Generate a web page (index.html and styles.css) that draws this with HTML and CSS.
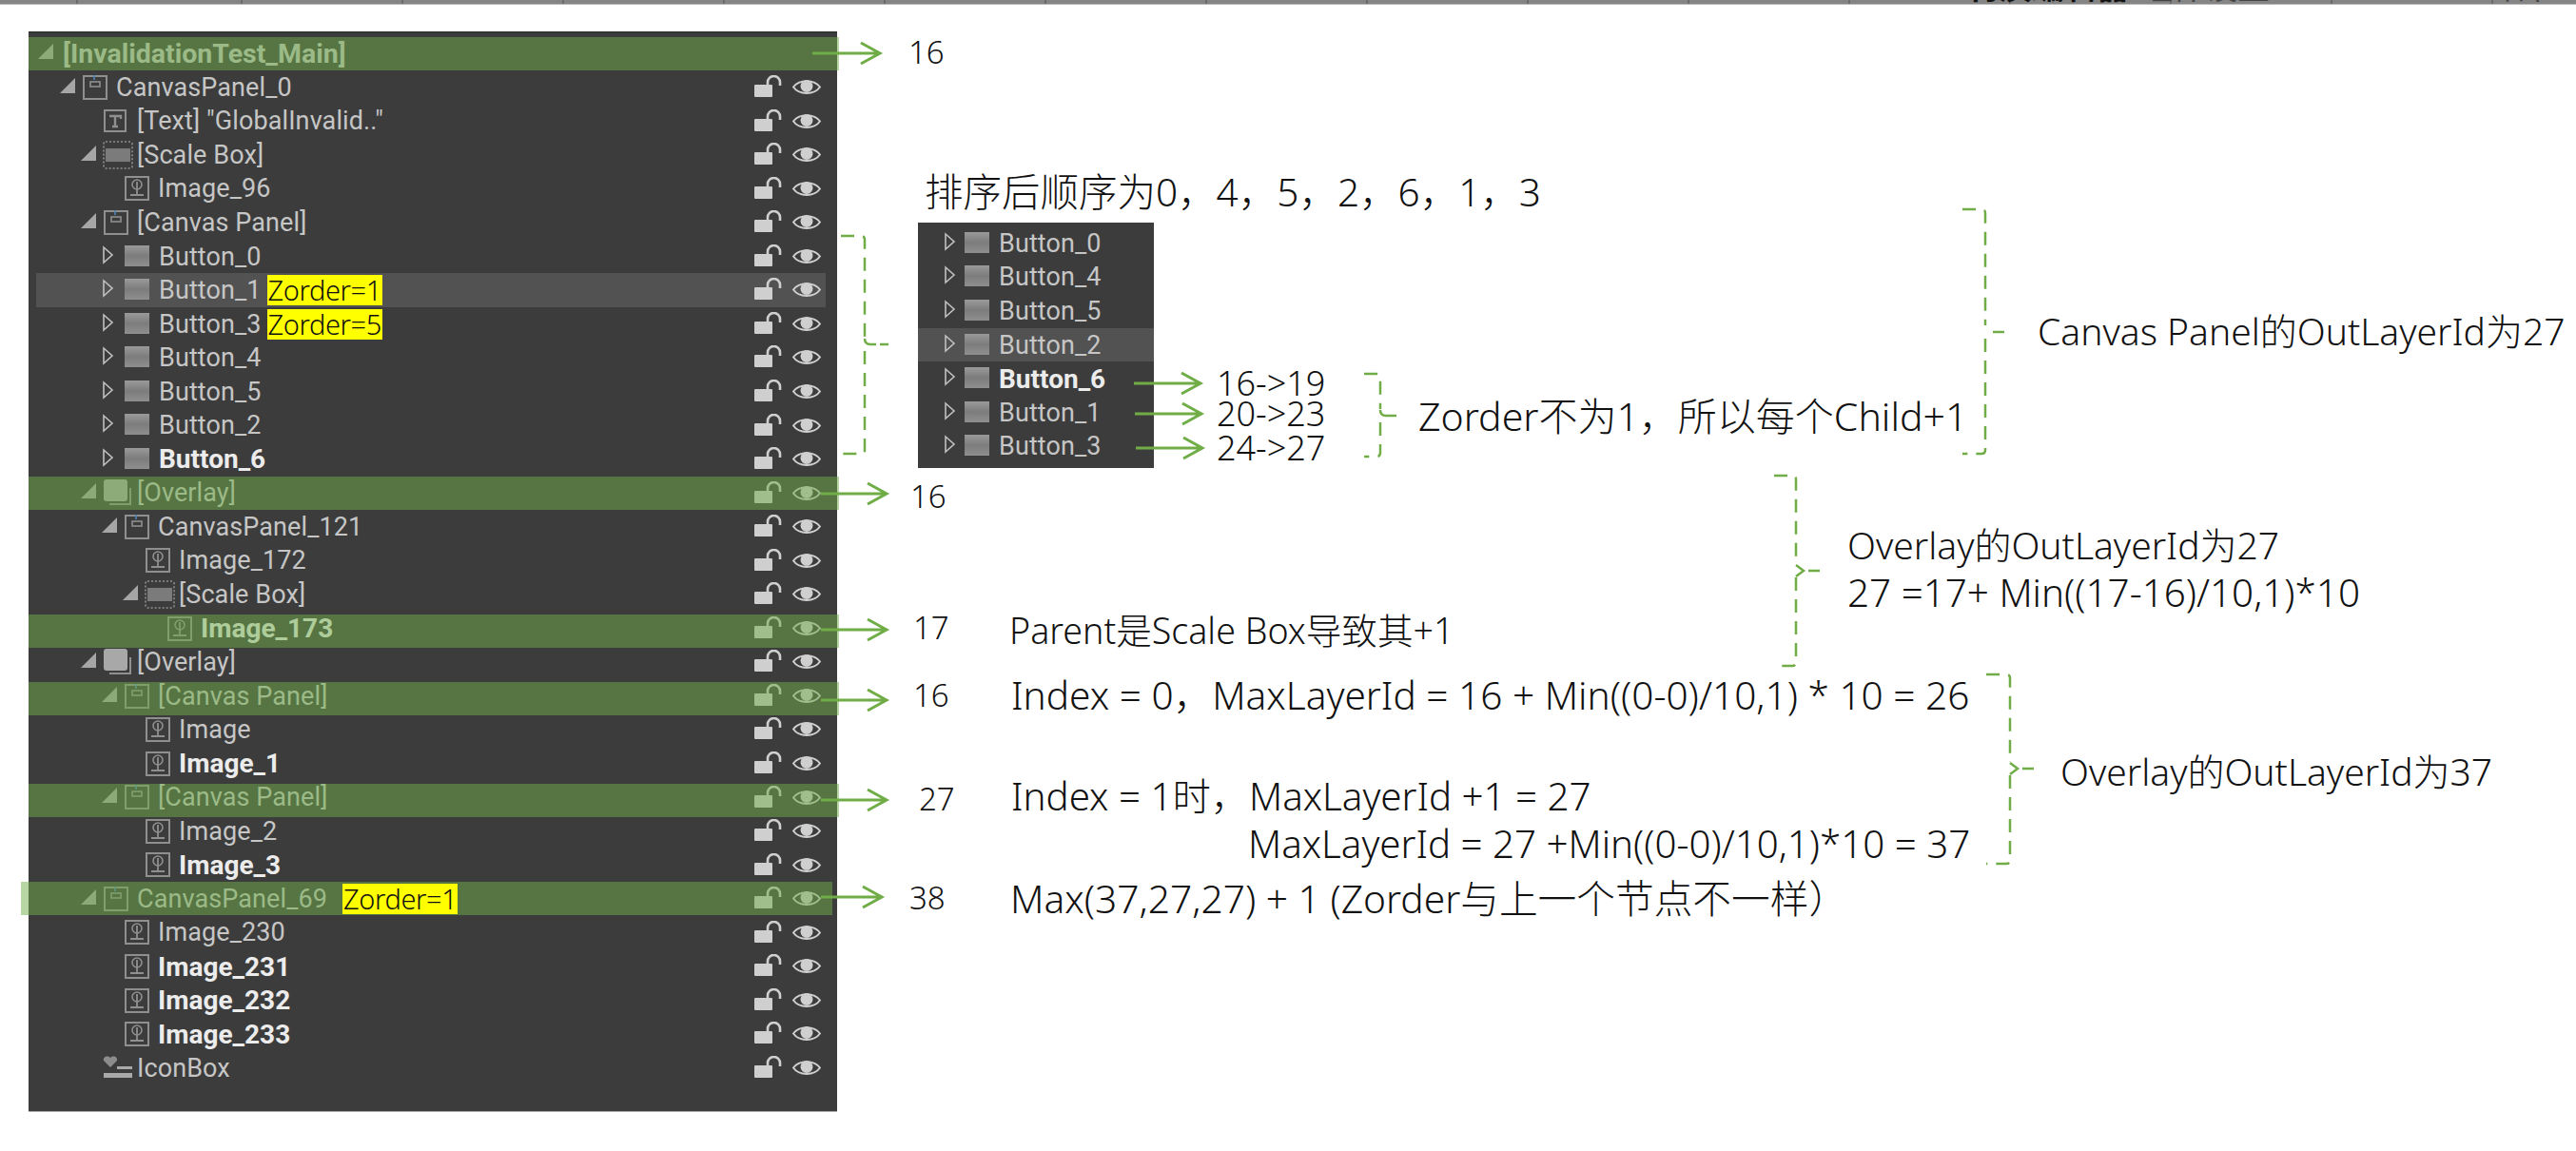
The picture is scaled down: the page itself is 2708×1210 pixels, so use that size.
FILE: index.html
```html
<!DOCTYPE html>
<html lang="zh-CN">
<head>
    <meta charset="UTF-8">
    <title>InvalidationTest_Main</title>
    <link rel="stylesheet" href="styles.css">
</head>
<body>
    <svg class="sprite" width="0" height="0">
        <defs>
            <linearGradient id="btn-fill" x1="0" y1="0" x2="0" y2="1"><stop offset="0" stop-color="#9a9a9a"/><stop offset="0.5" stop-color="#7c7c7c"/><stop offset="1" stop-color="#8f8f8f"/></linearGradient>
        </defs>
        <symbol id="i-open" viewBox="0 0 16 16"><path d="M16 0V16H0Z" fill="currentColor"/></symbol>
        <symbol id="i-closed" viewBox="0 0 13 20"><path d="M2 2L11 10L2 18Z" fill="none" stroke="currentColor" stroke-width="1.6"/></symbol>
        <symbol id="i-panel" viewBox="0 0 26 26"><rect x="1" y="1" width="24" height="24" fill="none" stroke="currentColor" stroke-width="2"/><rect x="8" y="7" width="10" height="5" fill="none" stroke="currentColor" stroke-width="1.6"/><path d="M12 0V5" stroke="#4d86b8" stroke-width="1.6"/></symbol>
        <symbol id="i-text" viewBox="0 0 24 24"><rect x="1" y="1" width="22" height="22" fill="none" stroke="currentColor" stroke-width="2"/><path d="M6 7H18V10M12 7V18M9 18H15" fill="none" stroke="currentColor" stroke-width="2.4"/></symbol>
        <symbol id="i-scale" viewBox="0 0 32 30"><rect x="1" y="1" width="30" height="28" rx="2" fill="none" stroke="currentColor" stroke-width="1.6" stroke-dasharray="2 2"/><rect x="3" y="8" width="26" height="14" fill="#7b7b7b"/></symbol>
        <symbol id="i-image" viewBox="0 0 26 26"><rect x="1" y="1" width="24" height="24" fill="none" stroke="currentColor" stroke-width="2"/><circle cx="13" cy="9" r="5" fill="none" stroke="currentColor" stroke-width="1.6"/><path d="M13 6V19M6 20H20" fill="none" stroke="currentColor" stroke-width="1.8"/></symbol>
        <symbol id="i-button" viewBox="0 0 26 22"><rect width="26" height="22" fill="url(#btn-fill)"/></symbol>
        <symbol id="i-overlay" viewBox="0 0 32 30"><path d="M7 27H29V10" fill="none" stroke="#8f8f8f" stroke-width="2"/><rect x="1" y="1" width="25" height="23" rx="3" fill="#a8a8a8"/></symbol>
        <symbol id="i-iconbox" viewBox="0 0 32 28"><path d="M8 13L1 6C0 2 5 0 8 3C11 0 16 2 15 6Z" fill="#8c8c8c"/><path d="M15 12H31V15H15ZM1 19H31V24H1Z" fill="#a9a9a9"/></symbol>
        <symbol id="i-lock" viewBox="0 0 29 23"><rect y="10" width="19" height="13" rx="1" fill="currentColor"/><path d="M14 11V7.5a6 6 0 0 1 13 0V11" fill="none" stroke="currentColor" stroke-width="2.6"/></symbol>
        <symbol id="i-eye" viewBox="0 0 30 19"><path d="M1 9.5C7 1 23 1 29 9.5C23 18 7 18 1 9.5Z" fill="none" stroke="currentColor" stroke-width="2"/><circle cx="15" cy="8.5" r="6.5" fill="currentColor"/></symbol>
    </svg>

    <div class="topbar">
        <span class="cut cut-a">材质编辑器</span>
        <span class="cut cut-b">组件设置</span>
        <span class="cut cut-c">细节</span>
    </div>

    <div class="tree main-tree">
        <div class="row d0 hl"><svg class="tw"><use href="#i-open"/></svg><b class="name root">[InvalidationTest_Main]</b></div>
        <div class="row d1"><svg class="tw"><use href="#i-open"/></svg><svg class="ic"><use href="#i-panel"/></svg><span class="name">CanvasPanel_0</span><svg class="lock"><use href="#i-lock"/></svg><svg class="eye"><use href="#i-eye"/></svg></div>
        <div class="row d2"><i class="tw"></i><svg class="ic ic-sm"><use href="#i-text"/></svg><span class="name">[Text] "GlobalInvalid.."</span><svg class="lock"><use href="#i-lock"/></svg><svg class="eye"><use href="#i-eye"/></svg></div>
        <div class="row d2"><svg class="tw"><use href="#i-open"/></svg><svg class="ic ic-wide"><use href="#i-scale"/></svg><span class="name">[Scale Box]</span><svg class="lock"><use href="#i-lock"/></svg><svg class="eye"><use href="#i-eye"/></svg></div>
        <div class="row d3"><i class="tw"></i><svg class="ic"><use href="#i-image"/></svg><span class="name">Image_96</span><svg class="lock"><use href="#i-lock"/></svg><svg class="eye"><use href="#i-eye"/></svg></div>
        <div class="row d2"><svg class="tw"><use href="#i-open"/></svg><svg class="ic"><use href="#i-panel"/></svg><span class="name">[Canvas Panel]</span><svg class="lock"><use href="#i-lock"/></svg><svg class="eye"><use href="#i-eye"/></svg></div>
        <div class="row d3"><svg class="tw tw-r"><use href="#i-closed"/></svg><svg class="ic ic-btn"><use href="#i-button"/></svg><span class="name">Button_0</span><svg class="lock"><use href="#i-lock"/></svg><svg class="eye"><use href="#i-eye"/></svg></div>
        <div class="row d3 hover"><svg class="tw tw-r"><use href="#i-closed"/></svg><svg class="ic ic-btn"><use href="#i-button"/></svg><span class="name">Button_1</span><mark class="zorder">Zorder=1</mark><svg class="lock"><use href="#i-lock"/></svg><svg class="eye"><use href="#i-eye"/></svg></div>
        <div class="row d3"><svg class="tw tw-r"><use href="#i-closed"/></svg><svg class="ic ic-btn"><use href="#i-button"/></svg><span class="name">Button_3</span><mark class="zorder">Zorder=5</mark><svg class="lock"><use href="#i-lock"/></svg><svg class="eye"><use href="#i-eye"/></svg></div>
        <div class="row d3"><svg class="tw tw-r"><use href="#i-closed"/></svg><svg class="ic ic-btn"><use href="#i-button"/></svg><span class="name">Button_4</span><svg class="lock"><use href="#i-lock"/></svg><svg class="eye"><use href="#i-eye"/></svg></div>
        <div class="row d3"><svg class="tw tw-r"><use href="#i-closed"/></svg><svg class="ic ic-btn"><use href="#i-button"/></svg><span class="name">Button_5</span><svg class="lock"><use href="#i-lock"/></svg><svg class="eye"><use href="#i-eye"/></svg></div>
        <div class="row d3"><svg class="tw tw-r"><use href="#i-closed"/></svg><svg class="ic ic-btn"><use href="#i-button"/></svg><span class="name">Button_2</span><svg class="lock"><use href="#i-lock"/></svg><svg class="eye"><use href="#i-eye"/></svg></div>
        <div class="row d3"><svg class="tw tw-r"><use href="#i-closed"/></svg><svg class="ic ic-btn"><use href="#i-button"/></svg><b class="name">Button_6</b><svg class="lock"><use href="#i-lock"/></svg><svg class="eye"><use href="#i-eye"/></svg></div>
        <div class="row d2 hl"><svg class="tw"><use href="#i-open"/></svg><svg class="ic ic-wide"><use href="#i-overlay"/></svg><span class="name">[Overlay]</span><svg class="lock"><use href="#i-lock"/></svg><svg class="eye"><use href="#i-eye"/></svg></div>
        <div class="row d3"><svg class="tw"><use href="#i-open"/></svg><svg class="ic"><use href="#i-panel"/></svg><span class="name">CanvasPanel_121</span><svg class="lock"><use href="#i-lock"/></svg><svg class="eye"><use href="#i-eye"/></svg></div>
        <div class="row d4"><i class="tw"></i><svg class="ic"><use href="#i-image"/></svg><span class="name">Image_172</span><svg class="lock"><use href="#i-lock"/></svg><svg class="eye"><use href="#i-eye"/></svg></div>
        <div class="row d4"><svg class="tw"><use href="#i-open"/></svg><svg class="ic ic-wide"><use href="#i-scale"/></svg><span class="name">[Scale Box]</span><svg class="lock"><use href="#i-lock"/></svg><svg class="eye"><use href="#i-eye"/></svg></div>
        <div class="row d5 hl hl-low"><i class="tw"></i><svg class="ic"><use href="#i-image"/></svg><b class="name">Image_173</b><svg class="lock"><use href="#i-lock"/></svg><svg class="eye"><use href="#i-eye"/></svg></div>
        <div class="row d2"><svg class="tw"><use href="#i-open"/></svg><svg class="ic ic-wide"><use href="#i-overlay"/></svg><span class="name">[Overlay]</span><svg class="lock"><use href="#i-lock"/></svg><svg class="eye"><use href="#i-eye"/></svg></div>
        <div class="row d3 hl hl-low"><svg class="tw"><use href="#i-open"/></svg><svg class="ic"><use href="#i-panel"/></svg><span class="name">[Canvas Panel]</span><svg class="lock"><use href="#i-lock"/></svg><svg class="eye"><use href="#i-eye"/></svg></div>
        <div class="row d4"><i class="tw"></i><svg class="ic"><use href="#i-image"/></svg><span class="name">Image</span><svg class="lock"><use href="#i-lock"/></svg><svg class="eye"><use href="#i-eye"/></svg></div>
        <div class="row d4"><i class="tw"></i><svg class="ic"><use href="#i-image"/></svg><b class="name">Image_1</b><svg class="lock"><use href="#i-lock"/></svg><svg class="eye"><use href="#i-eye"/></svg></div>
        <div class="row d3 hl hl-low"><svg class="tw"><use href="#i-open"/></svg><svg class="ic"><use href="#i-panel"/></svg><span class="name">[Canvas Panel]</span><svg class="lock"><use href="#i-lock"/></svg><svg class="eye"><use href="#i-eye"/></svg></div>
        <div class="row d4"><i class="tw"></i><svg class="ic"><use href="#i-image"/></svg><span class="name">Image_2</span><svg class="lock"><use href="#i-lock"/></svg><svg class="eye"><use href="#i-eye"/></svg></div>
        <div class="row d4"><i class="tw"></i><svg class="ic"><use href="#i-image"/></svg><b class="name">Image_3</b><svg class="lock"><use href="#i-lock"/></svg><svg class="eye"><use href="#i-eye"/></svg></div>
        <div class="row d2 hl hl-wide"><svg class="tw"><use href="#i-open"/></svg><svg class="ic"><use href="#i-panel"/></svg><span class="name">CanvasPanel_69</span><mark class="zorder zorder-far">Zorder=1</mark><svg class="lock"><use href="#i-lock"/></svg><svg class="eye"><use href="#i-eye"/></svg></div>
        <div class="row d3"><i class="tw"></i><svg class="ic"><use href="#i-image"/></svg><span class="name">Image_230</span><svg class="lock"><use href="#i-lock"/></svg><svg class="eye"><use href="#i-eye"/></svg></div>
        <div class="row d3"><i class="tw"></i><svg class="ic"><use href="#i-image"/></svg><b class="name">Image_231</b><svg class="lock"><use href="#i-lock"/></svg><svg class="eye"><use href="#i-eye"/></svg></div>
        <div class="row d3"><i class="tw"></i><svg class="ic"><use href="#i-image"/></svg><b class="name">Image_232</b><svg class="lock"><use href="#i-lock"/></svg><svg class="eye"><use href="#i-eye"/></svg></div>
        <div class="row d3"><i class="tw"></i><svg class="ic"><use href="#i-image"/></svg><b class="name">Image_233</b><svg class="lock"><use href="#i-lock"/></svg><svg class="eye"><use href="#i-eye"/></svg></div>
        <div class="row d2"><i class="tw"></i><svg class="ic ic-wide"><use href="#i-iconbox"/></svg><span class="name">IconBox</span><svg class="lock"><use href="#i-lock"/></svg><svg class="eye"><use href="#i-eye"/></svg></div>
    </div>

    <div class="tree sorted-tree">
        <div class="row"><svg class="tw tw-r"><use href="#i-closed"/></svg><svg class="ic ic-btn"><use href="#i-button"/></svg><span class="name">Button_0</span></div>
        <div class="row"><svg class="tw tw-r"><use href="#i-closed"/></svg><svg class="ic ic-btn"><use href="#i-button"/></svg><span class="name">Button_4</span></div>
        <div class="row"><svg class="tw tw-r"><use href="#i-closed"/></svg><svg class="ic ic-btn"><use href="#i-button"/></svg><span class="name">Button_5</span></div>
        <div class="row hover-full"><svg class="tw tw-r"><use href="#i-closed"/></svg><svg class="ic ic-btn"><use href="#i-button"/></svg><span class="name">Button_2</span></div>
        <div class="row"><svg class="tw tw-r"><use href="#i-closed"/></svg><svg class="ic ic-btn"><use href="#i-button"/></svg><b class="name">Button_6</b></div>
        <div class="row"><svg class="tw tw-r"><use href="#i-closed"/></svg><svg class="ic ic-btn"><use href="#i-button"/></svg><span class="name">Button_1</span></div>
        <div class="row"><svg class="tw tw-r"><use href="#i-closed"/></svg><svg class="ic ic-btn"><use href="#i-button"/></svg><span class="name">Button_3</span></div>
    </div>

    <!-- arrows and brackets -->
    <svg class="marks" width="2708" height="1210" viewBox="0 0 2708 1210">
        <g class="arrows">
            <path d="M854 56H925M905 45L925 56L905 67"/>
            <path d="M863 519H932M912 508L932 519L912 530"/>
            <path d="M863 662H932M912 651L932 662L912 673"/>
            <path d="M863 736H932M912 725L932 736L912 747"/>
            <path d="M863 841H932M912 830L932 841L912 852"/>
            <path d="M863 943H927M907 932L927 943L907 954"/>
            <path d="M1192 403H1262M1242 392L1262 403L1242 414"/>
            <path d="M1193 435H1263M1243 424L1263 435L1243 446"/>
            <path d="M1194 471H1264M1244 460L1264 471L1244 482"/>
        </g>
        <g class="brackets">
            <path d="M884 248H905Q909 248 909 252V355M909 369V473Q909 477 905 477H884"/>
            <path d="M1434 393H1447Q1451 393 1451 397V430M1451 444V476Q1451 480 1447 480H1434"/>
            <path d="M2063 220H2083Q2087 220 2087 224V342M2087 356V473Q2087 477 2083 477H2063"/>
            <path d="M1865 500H1884Q1888 500 1888 504V593M1888 607V696Q1888 700 1884 700H1865"/>
            <path d="M2088 709H2109Q2113 709 2113 713V801M2113 815V904Q2113 908 2109 908H2088"/>
        </g>
        <g class="ticks">
            <path d="M909 356Q909 362 915 362H921M925 362H934"/>
            <path d="M1451 431Q1451 437 1457 437H1468"/>
            <path d="M2095 349H2107"/>
            <path d="M1888 594L1896 600L1888 606M1901 600H1913"/>
            <path d="M2113 802L2121 808L2113 814M2126 808H2138"/>
        </g>
    </svg>

    <p class="note n-order">排序后顺序为0，4，5，2，6，1，3</p>
    <p class="note n-range n-range1">16-&gt;19</p>
    <p class="note n-range n-range2">20-&gt;23</p>
    <p class="note n-range n-range3">24-&gt;27</p>
    <p class="note n-child">Zorder不为1，所以每个Child+1</p>
    <p class="note n-canvas">Canvas Panel的OutLayerId为27</p>
    <p class="note n-num n-main">16</p>
    <p class="note n-num n-overlay">16</p>
    <p class="note n-num n-17">17</p>
    <p class="note n-parent">Parent是Scale Box导致其+1</p>
    <p class="note n-num n-16b">16</p>
    <p class="note n-index0">Index = 0，MaxLayerId = 16 + Min((0-0)/10,1) * 10 = 26</p>
    <p class="note n-num n-27">27</p>
    <p class="note n-index1">Index = 1时，MaxLayerId +1 = 27</p>
    <p class="note n-index1b">MaxLayerId = 27 +Min((0-0)/10,1)*10 = 37</p>
    <p class="note n-num n-38">38</p>
    <p class="note n-max">Max(37,27,27) + 1 (Zorder与上一个节点不一样）</p>
    <p class="note n-ov n-ov27">Overlay的OutLayerId为27</p>
    <p class="note n-ovcalc">27 =17+ Min((17-16)/10,1)*10</p>
    <p class="note n-ov n-ov37">Overlay的OutLayerId为37</p>
</body>
</html>
```

FILE: styles.css
```css
html, body { margin: 0; padding: 0; }
body { position: relative; width: 2708px; height: 1210px; overflow: hidden; background: #fff; font-family: "Noto Sans", "Noto Sans CJK SC", sans-serif; }
.sprite { position: absolute; }

/* cut off window strip */
.topbar { position: absolute; left: 0; top: 0; width: 100%; height: 4px; overflow: hidden; background: repeating-linear-gradient(90deg, #858585 0 167px, #6c6c6c 167px 169px); background-position: 86px 0; border-bottom: 1px solid #b5b5b5; }
.cut { position: absolute; top: -32px; font-size: 34px; line-height: 36px; white-space: nowrap; color: #111; }
.cut-a { left: 2068px; font-weight: 700; }
.cut-b { left: 2250px; color: #444; }
.cut-c { left: 2620px; color: #444; }

/* tree panels */
.tree { position: absolute; background: #3c3c3c; color: #c6c6c6; font-family: Roboto, sans-serif; font-size: 27px; }
.main-tree { left: 30px; top: 33px; width: 850px; height: 1136px; padding-top: 3.5px; box-sizing: border-box; border-top: 2px solid #333; border-bottom: 1px solid #aaa; }
.sorted-tree { left: 965px; top: 234px; width: 248px; height: 258px; padding-top: 4px; box-sizing: border-box; }
.row { position: relative; display: flex; align-items: center; height: 35.56px; white-space: nowrap; }
.sorted-tree .row { padding-left: 27px; height: 35.6px; }
.d0 { padding-left: 10px; }
.d1 { padding-left: 33px; }
.d2 { padding-left: 55px; }
.d3 { padding-left: 77px; }
.d4 { padding-left: 99px; }
.d5 { padding-left: 122px; }

.tw { display: block; flex: none; width: 16px; height: 16px; margin-right: 8px; margin-top: -4px; color: #a6a6a6; }
.tw-r { width: 13px; height: 20px; margin-right: 11px; color: #c0c0c0; }
.sorted-tree .tw-r { margin-right: 9px; }
.ic { flex: none; width: 26px; height: 26px; margin-right: 9px; color: #8f8f8f; }
.ic-sm { width: 24px; height: 24px; margin-right: 11px; }
.ic-wide { width: 32px; height: 30px; margin-left: -1px; margin-right: 4px; }
.ic-btn { height: 22px; margin-right: 10px; margin-top: -2px; }
.name { font-weight: 400; letter-spacing: 0.1px; }
b.name { font-weight: 700; font-size: 28px; color: #ececec; letter-spacing: 0; }
b.root { margin-left: 2px; font-size: 28.5px; color: #c6c6c6; }

.zorder { position: relative; z-index: 1; margin-left: 6px; padding: 0 1px; height: 32px; line-height: 32px; background: #ffff00; color: #111; font-family: "Noto Sans", sans-serif; font-size: 29px; font-weight: 300; letter-spacing: -0.4px; }
.zorder-far { margin-left: 16px; }

.lock { position: absolute; left: 763px; top: 5px; width: 29px; height: 23px; color: #cfcfcf; }
.eye { position: absolute; left: 803px; top: 8px; width: 30px; height: 19px; color: #cfcfcf; }

.hover::before { content: ""; position: absolute; left: 8px; right: 12px; top: 0; bottom: 0; background: #525252; }
.hover > * { position: relative; }
.hover > .lock, .hover > .eye { position: absolute; }
.hover-full { background: #525252; }

/* translucent green bands drawn on top of the rows */
.hl::after { content: ""; position: absolute; left: 0; right: -2px; top: 0; height: 35px; background: rgba(112, 173, 71, 0.5); }
.hl-low::after { top: 3px; }
.hl-wide::after { left: -8px; right: 5px; }

/* annotations */
.marks { position: absolute; left: 0; top: 0; }
.arrows path { fill: none; stroke: #70ad47; stroke-width: 3; }
.brackets path { fill: none; stroke: #70ad47; stroke-width: 2.5; stroke-dasharray: 14 9; }
.ticks path { fill: none; stroke: #70ad47; stroke-width: 2.5; }

.note { position: absolute; margin: 0; font-size: 40px; line-height: 44px; font-weight: 300; color: #111; white-space: nowrap; }
.n-num { font-size: 33px; }
.n-range { font-size: 36px; line-height: 32px; }
.n-ov { font-size: 39px; }
.n-order { left: 972px; top: 180px; font-size: 40.5px; }
.n-range1 { left: 1279px; top: 387px; }
.n-range2 { left: 1279px; top: 419px; }
.n-range3 { left: 1279px; top: 455px; }
.n-child { left: 1491px; top: 415px; font-size: 41px; }
.n-canvas { left: 2142px; top: 326px; font-size: 39px; }
.n-main { left: 955px; top: 33px; }
.n-overlay { left: 957px; top: 500px; }
.n-17 { left: 960px; top: 638px; }
.n-parent { left: 1061px; top: 641px; font-size: 37.6px; }
.n-16b { left: 960px; top: 709px; }
.n-index0 { left: 1063px; top: 709px; font-size: 40.6px; }
.n-27 { left: 966px; top: 818px; }
.n-index1 { left: 1063px; top: 815px; font-size: 40.3px; }
.n-index1b { left: 1312px; top: 865px; font-size: 40.3px; }
.n-38 { left: 956px; top: 922px; }
.n-max { left: 1062px; top: 922px; font-size: 40.7px; }
.n-ov27 { left: 1942px; top: 551px; }
.n-ovcalc { left: 1942px; top: 601px; font-size: 40.4px; }
.n-ov37 { left: 2166px; top: 789px; }
```
